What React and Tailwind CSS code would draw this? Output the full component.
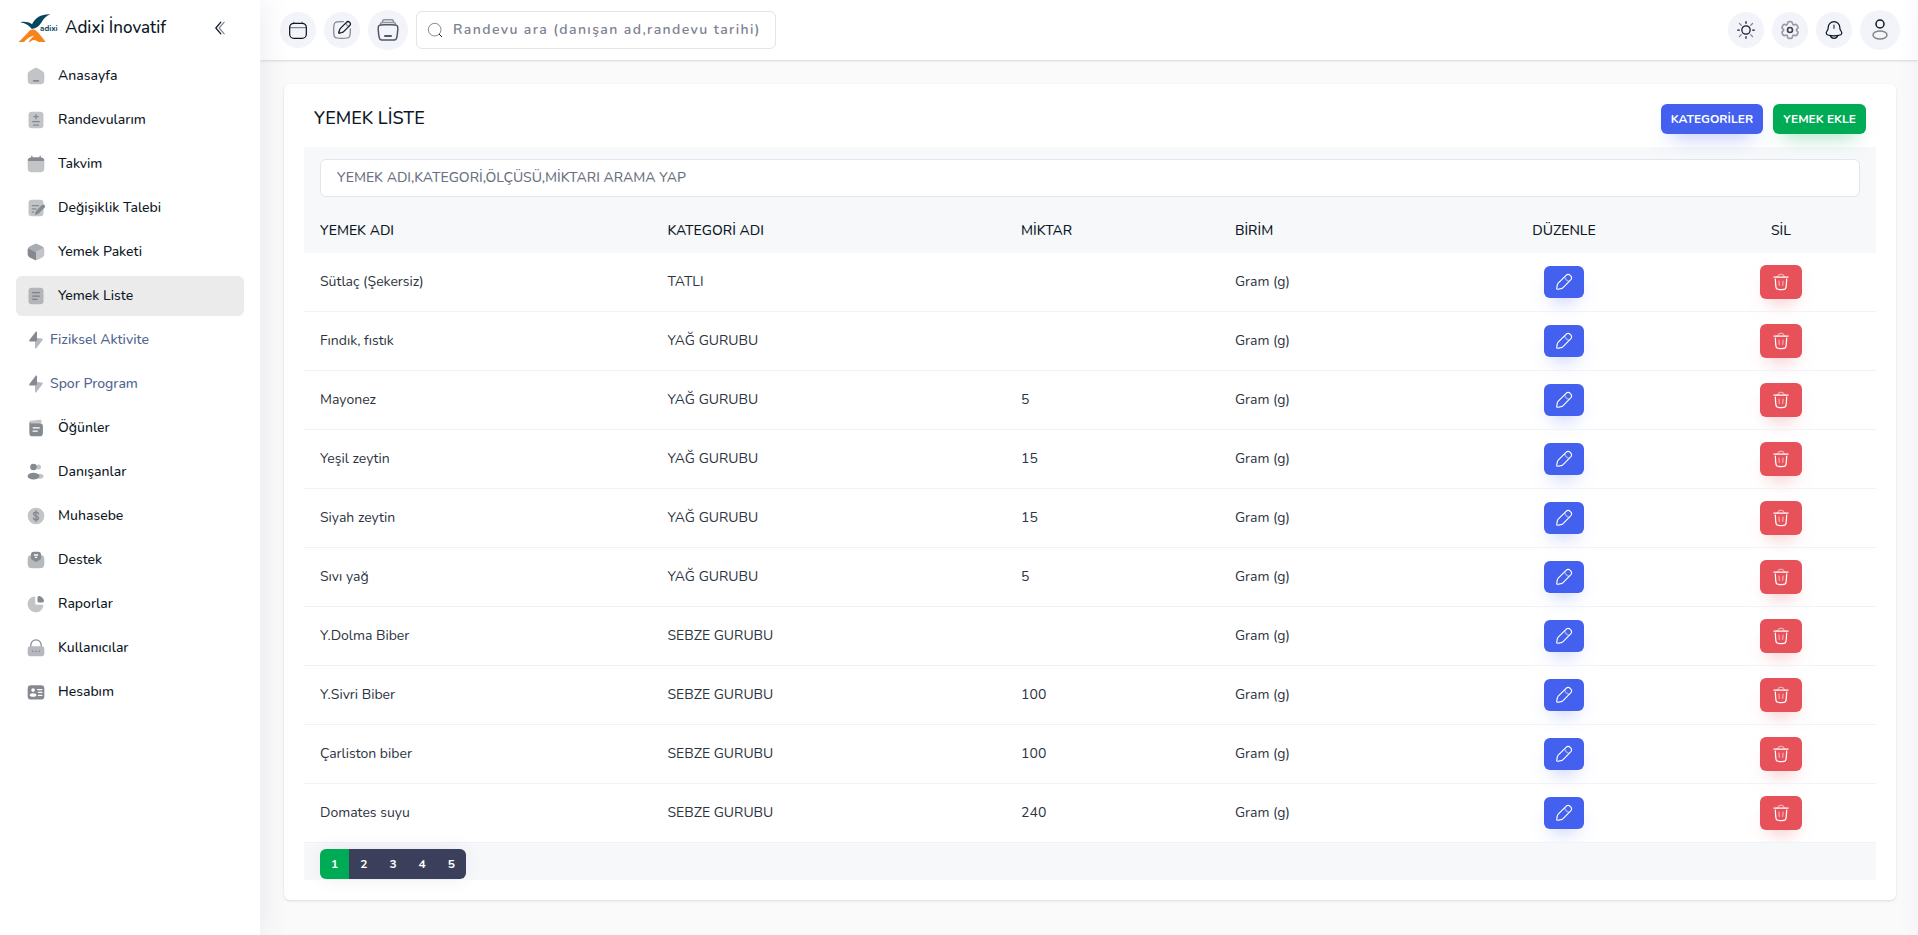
import React, { useState } from 'react';

const Svg = ({ size = 20, className = '', children }) => (
  <svg width={size} height={size} viewBox="0 0 24 24" fill="none" xmlns="http://www.w3.org/2000/svg" className={`shrink-0 ${className}`} aria-hidden="true">
    {children}
  </svg>
);

const Logo = () => (
  <svg width="42" height="30" viewBox="0 0 42 30" className="shrink-0" aria-hidden="true">
    <path d="M2.4 9.2C6.4 8.4 10.6 9 14 11.2C17.4 4.4 23.4 0.8 32.4 1.2C28.6 2.4 25.8 5.2 23.4 9.4C21.2 13 18 15.4 13.8 16C11.6 12.6 7.8 10.4 2.4 9.2Z" fill="#064660" />
    <path d="M0.5 29C4.8 25.4 7.8 21.4 10.8 18.4C13.2 16 16.2 16 18.4 18C21.8 21.2 24.8 25 27.6 29H20.6C18.8 27.8 17.2 27 15.6 27C14.2 27 13 28 12 29H10.6C12 26.4 14 24.2 16.4 22.4C12 23.2 8.8 25.6 6 29Z" fill="#f5841f" />
    <text x="22" y="18" fontSize="8" fontWeight="700" fontFamily="Nunito, sans-serif" fill="#064660">adixi</text>
  </svg>
);

const icons = {
  home: (
    <>
      <path opacity="0.5" d="M2 12.2C2 9.9 2 8.8 2.5 7.8C3 6.9 4 6.3 5.9 5.1L7.9 3.9C9.9 2.6 10.9 2 12 2C13.1 2 14.1 2.6 16.1 3.9L18.1 5.1C20 6.3 21 6.9 21.5 7.8C22 8.8 22 9.9 22 12.2V13.7C22 17.6 22 19.6 20.8 20.8C19.7 22 17.8 22 14 22H10C6.2 22 4.3 22 3.2 20.8C2 19.6 2 17.6 2 13.7V12.2Z" fill="currentColor" />
      <rect x="8.25" y="16.8" width="7.5" height="2" rx="0.75" fill="currentColor" />
    </>
  ),
  appointments: (
    <>
      <rect opacity="0.5" x="3" y="2" width="18" height="20" rx="4" fill="currentColor" />
      <path d="M12 5.5V10.5M9.5 8H14.5M8 14H16M9 18H15" stroke="currentColor" strokeWidth="1.5" strokeLinecap="round" />
    </>
  ),
  calendar: (
    <>
      <path d="M7.75 2.5C7.75 2.1 7.4 1.75 7 1.75C6.6 1.75 6.25 2.1 6.25 2.5V4.1C4.8 4.2 3.9 4.5 3.2 5.2C2.5 5.8 2.2 6.8 2.1 8.25H21.9C21.8 6.8 21.5 5.8 20.8 5.2C20.1 4.5 19.2 4.2 17.75 4.1V2.5C17.75 2.1 17.4 1.75 17 1.75C16.6 1.75 16.25 2.1 16.25 2.5V4H7.75V2.5Z" fill="currentColor" />
      <path opacity="0.5" d="M2 12C2 11.2 2 8.9 2.1 8.25H21.9C22 8.9 22 11.2 22 12V14C22 17.8 22 19.7 20.8 20.8C19.7 22 17.8 22 14 22H10C6.2 22 4.3 22 3.2 20.8C2 19.7 2 17.8 2 14V12Z" fill="currentColor" />
    </>
  ),
  request: (
    <>
      <rect opacity="0.5" x="3" y="2" width="18" height="20" rx="4" fill="currentColor" />
      <path d="M12.3 15.2L19 8.5C19.9 7.6 21.3 7.6 22.2 8.5C23.1 9.4 23.1 10.8 22.2 11.7L15.5 18.4C14.9 19 14.4 19.2 13.7 19.4L11.4 20C11 20.1 10.6 19.8 10.8 19.3L11.4 17C11.6 16.3 11.8 15.7 12.3 15.2Z" fill="currentColor" />
      <path d="M7.5 9H15M7.5 13H12M7.5 17H9" stroke="currentColor" strokeWidth="1.5" strokeLinecap="round" />
    </>
  ),
  box: (
    <>
      <path d="M12 12V22C11.2 22 10.4 21.6 8.9 20.8L6.5 19.6C4.3 18.4 3.2 17.9 2.6 16.8C2 15.8 2 14.5 2 12C2 9.6 2 8.3 2.6 7.2L12 12Z" fill="currentColor" />
      <path opacity="0.7" d="M8.6 3.2C10.2 2.4 11.1 2 12 2C12.9 2 13.8 2.4 15.4 3.2L17.8 4.5C19.9 5.6 20.9 6.1 21.4 7.2L12 12L2.6 7.2C3.1 6.1 4.1 5.6 6.2 4.5L8.6 3.2Z" fill="currentColor" />
      <path opacity="0.5" d="M12 12L21.4 7.2C22 8.3 22 9.6 22 12C22 14.5 22 15.8 21.4 16.8C20.8 17.9 19.7 18.4 17.5 19.6L15.1 20.8C13.6 21.6 12.8 22 12 22V12Z" fill="currentColor" />
    </>
  ),
  list: (
    <>
      <rect opacity="0.5" x="3" y="2" width="18" height="20" rx="4" fill="currentColor" />
      <path d="M8 8H16M8 12H16M8 16H13" stroke="currentColor" strokeWidth="1.5" strokeLinecap="round" />
    </>
  ),
  bolt: (
    <>
      <path opacity="0.6" d="M10.8 14.4V21.2C10.8 22.4 11.6 22.6 12.3 21.8L19.7 12.4C20.5 11.3 20.2 10.4 19 10.2L13.2 9.6V12.8L10.8 14.4Z" fill="currentColor" />
      <path d="M13.2 9.6V2.8C13.2 1.6 12.4 1.4 11.7 2.2L4.3 11.6C3.5 12.7 3.8 13.8 5 13.8H10.8V14.4L13.2 12.8V9.6Z" fill="currentColor" />
    </>
  ),
  meals: (
    <>
      <path opacity="0.5" d="M4 6.2V5.6C4 4.2 4.8 3.6 6 3.4L16.5 2.1C18 1.9 18.6 2.5 18.6 3.8V6.2H4Z" fill="currentColor" />
      <path fillRule="evenodd" clipRule="evenodd" d="M4 5.5C4 5.5 4.6 6.2 6 6.2H16C19 6.2 20.3 7.4 20.3 10V18C20.3 20.8 19 22 16.3 22H8C5.2 22 4 20.8 4 18V5.5ZM8.5 11C8.1 11 7.75 11.3 7.75 11.8C7.75 12.2 8.1 12.5 8.5 12.5H16C16.4 12.5 16.75 12.2 16.75 11.8C16.75 11.3 16.4 11 16 11H8.5ZM8.5 15C8.1 15 7.75 15.3 7.75 15.8C7.75 16.2 8.1 16.5 8.5 16.5H13.5C13.9 16.5 14.25 16.2 14.25 15.8C14.25 15.3 13.9 15 13.5 15H8.5Z" fill="currentColor" />
    </>
  ),
  users: (
    <>
      <circle opacity="0.5" cx="15" cy="6" r="3" fill="currentColor" />
      <ellipse opacity="0.5" cx="16" cy="17" rx="5" ry="3" fill="currentColor" />
      <circle cx="9" cy="6" r="4" fill="currentColor" />
      <ellipse cx="9" cy="17" rx="7" ry="4" fill="currentColor" />
    </>
  ),
  dollar: (
    <>
      <circle opacity="0.5" cx="12" cy="12" r="10" fill="currentColor" />
      <path d="M12 5.8V18.2M15 9.6C15 8.3 13.7 7.5 12 7.5C10.3 7.5 9 8.4 9 9.7C9 11.1 10.2 11.6 12 12C13.8 12.4 15 13 15 14.3C15 15.7 13.7 16.5 12 16.5C10.3 16.5 9 15.6 9 14.3" stroke="currentColor" strokeWidth="1.7" strokeLinecap="round" />
    </>
  ),
  support: (
    <>
      <path opacity="0.6" d="M2 12C2 8.5 3 6.5 6 6L12 10L18 6C21 6.5 22 8.5 22 12V15C22 20.5 20.5 22 15 22H9C3.5 22 2 20.5 2 15V12Z" fill="currentColor" />
      <path fillRule="evenodd" clipRule="evenodd" d="M6 5.5C6 3 7 2 9.5 2H14.5C17 2 18 3 18 5.5V9.5C18 10.5 17.5 11 16.7 11.6L13.8 13.4C12.6 14.2 11.4 14.2 10.2 13.4L7.3 11.6C6.5 11 6 10.5 6 9.5V5.5ZM9.5 5.2V6.8H14.5V5.2H9.5ZM10.5 8.2V9.6H13.5V8.2H10.5Z" fill="currentColor" />
    </>
  ),
  reports: (
    <>
      <path opacity="0.5" d="M10 3C5.5 3.3 2 7.2 2 12C2 17.2 6.3 21.8 11.5 22C16.3 22 20.2 18.5 20.8 14C20.8 13.4 20.4 13 19.8 13H12.5C11.6 13 11 12.4 11 11.5V4C11 3.4 10.6 3 10 3Z" fill="currentColor" />
      <path d="M21.5 7.6C20.6 5.2 18.8 3.4 16.4 2.5C15 2 13.8 3 13.8 4.5V8.8C13.8 9.7 14.3 10.2 15.2 10.2H19.5C21 10.2 22 9 21.5 7.6Z" fill="currentColor" />
    </>
  ),
  lock: (
    <>
      <path opacity="0.6" d="M2 16C2 13.2 2 11.8 2.9 10.9C3.8 10 5.2 10 8 10H16C18.8 10 20.2 10 21.1 10.9C22 11.8 22 13.2 22 16C22 18.8 22 20.2 21.1 21.1C20.2 22 18.8 22 16 22H8C5.2 22 3.8 22 2.9 21.1C2 20.2 2 18.8 2 16Z" fill="currentColor" />
      <path d="M5.8 10V8.5C5.8 5 8.5 2.2 12 2.2C15.5 2.2 18.2 5 18.2 8.5V10" stroke="currentColor" strokeWidth="1.5" />
      <circle cx="8" cy="16" r="1" fill="currentColor" />
      <circle cx="12" cy="16" r="1" fill="currentColor" />
      <circle cx="16" cy="16" r="1" fill="currentColor" />
    </>
  ),
  account: (
    <>
      <rect x="2" y="4" width="20" height="17" rx="4" fill="currentColor" />
      <circle cx="8.5" cy="9.7" r="2.2" fill="white" />
      <ellipse cx="8.5" cy="15.6" rx="4" ry="2.2" fill="white" />
      <path d="M14 9H19M15 12.5H19M15 16H19" stroke="white" strokeWidth="1.5" strokeLinecap="round" />
    </>
  ),
};

const menu = [
  { label: 'Anasayfa', icon: 'home' },
  { label: 'Randevularım', icon: 'appointments' },
  { label: 'Takvim', icon: 'calendar' },
  { label: 'Değişiklik Talebi', icon: 'request' },
  { label: 'Yemek Paketi', icon: 'box' },
  { label: 'Yemek Liste', icon: 'list', active: true },
  { label: 'Fiziksel Aktivite', icon: 'bolt', sub: true },
  { label: 'Spor Program', icon: 'bolt', sub: true },
  { label: 'Öğünler', icon: 'meals' },
  { label: 'Danışanlar', icon: 'users' },
  { label: 'Muhasebe', icon: 'dollar' },
  { label: 'Destek', icon: 'support' },
  { label: 'Raporlar', icon: 'reports' },
  { label: 'Kullanıcılar', icon: 'lock' },
  { label: 'Hesabım', icon: 'account' },
];

const foods = [
  { name: 'Sütlaç (Şekersiz)', category: 'TATLI', amount: '', unit: 'Gram (g)' },
  { name: 'Fındık, fıstık', category: 'YAĞ GURUBU', amount: '', unit: 'Gram (g)' },
  { name: 'Mayonez', category: 'YAĞ GURUBU', amount: '5', unit: 'Gram (g)' },
  { name: 'Yeşil zeytin', category: 'YAĞ GURUBU', amount: '15', unit: 'Gram (g)' },
  { name: 'Siyah zeytin', category: 'YAĞ GURUBU', amount: '15', unit: 'Gram (g)' },
  { name: 'Sıvı yağ', category: 'YAĞ GURUBU', amount: '5', unit: 'Gram (g)' },
  { name: 'Y.Dolma Biber', category: 'SEBZE GURUBU', amount: '', unit: 'Gram (g)' },
  { name: 'Y.Sivri Biber', category: 'SEBZE GURUBU', amount: '100', unit: 'Gram (g)' },
  { name: 'Çarliston biber', category: 'SEBZE GURUBU', amount: '100', unit: 'Gram (g)' },
  { name: 'Domates suyu', category: 'SEBZE GURUBU', amount: '240', unit: 'Gram (g)' },
];

const Sidebar = () => (
  <aside className="relative z-20 w-[260px] shrink-0 bg-white shadow-[5px_0_25px_0_rgba(94,92,154,0.1)]">
    <div className="flex items-center justify-between pl-[18px] pr-6 h-14">
      <a href="#" className="flex items-center gap-[5px]">
        <Logo />
        <span className="text-[17px] font-medium">Adixi İnovatif</span>
      </a>
      <button type="button" aria-label="Menüyü daralt" className="w-8 h-8 flex items-center justify-center rounded-full">
        <Svg>
          <path d="M13 19L7 12L13 5" stroke="currentColor" strokeWidth="1.5" strokeLinecap="round" strokeLinejoin="round" />
          <path opacity="0.5" d="M17 19L11 12L17 5" stroke="currentColor" strokeWidth="1.5" strokeLinecap="round" strokeLinejoin="round" />
        </Svg>
      </button>
    </div>
    <nav>
      <ul className="flex flex-col gap-1 px-4">
        {menu.map((item) => (
          <li key={item.label}>
            <a
              href="#"
              className={`flex items-center h-10 px-2.5 rounded-md text-sm font-medium ${item.sub ? 'gap-1 text-[#506690]' : 'gap-3'} ${item.active ? 'bg-[#ebebeb]' : ''}`}
            >
              <Svg className="text-[#0e1726] opacity-50">{icons[item.icon]}</Svg>
              <span>{item.label}</span>
            </a>
          </li>
        ))}
      </ul>
    </nav>
  </aside>
);

const RoundButton = ({ label, big, children }) => (
  <button type="button" aria-label={label} className={`${big ? 'w-10 h-10' : 'w-9 h-9'} shrink-0 rounded-full bg-[#f3f4f9] flex items-center justify-center`}>
    {children}
  </button>
);

const Header = () => (
  <header className="h-[60px] bg-white shadow-sm flex items-center gap-2 pl-5 pr-[18px]">
    <RoundButton label="Takvim">
      <Svg>
        <rect x="2" y="4" width="20" height="18" rx="5" stroke="currentColor" strokeWidth="1.5" />
        <path opacity="0.5" d="M7 4V2.5M17 4V2.5M2.5 9H21.5" stroke="currentColor" strokeWidth="1.5" strokeLinecap="round" />
      </Svg>
    </RoundButton>
    <RoundButton label="Not ekle">
      <Svg>
        <path opacity="0.5" d="M22 10.5V12C22 16.7 22 19.1 20.5 20.5C19.1 22 16.7 22 12 22C7.3 22 4.9 22 3.5 20.5C2 19.1 2 16.7 2 12C2 7.3 2 4.9 3.5 3.5C4.9 2 7.3 2 12 2H13.5" stroke="currentColor" strokeWidth="1.5" strokeLinecap="round" />
        <path d="M17.3 2.8L16.7 3.4L10.7 9.4C10.2 9.9 10 10.1 9.9 10.3C9.7 10.6 9.5 10.8 9.4 11.1C9.3 11.4 9.2 11.7 9 12.2L8.1 14.9C7.9 15.6 8.4 16.1 9.1 15.9L11.8 15C12.3 14.8 12.6 14.7 12.9 14.6C13.2 14.5 13.4 14.3 13.7 14.1C13.9 14 14.1 13.8 14.6 13.3L21.2 6.7C22.3 5.6 22.3 3.9 21.2 2.8C20.1 1.7 18.4 1.7 17.3 2.8Z" stroke="currentColor" strokeWidth="1.5" />
        <path opacity="0.5" d="M16.6 3.5C16.6 3.5 16.7 4.9 17.9 6.1C19.1 7.3 20.5 7.4 20.5 7.4M10.2 15.6L8.4 13.8" stroke="currentColor" strokeWidth="1.5" />
      </Svg>
    </RoundButton>
    <RoundButton label="Arşiv" big>
      <Svg size={24} className="opacity-70">
        <path d="M2.4 13.5C2 10 1.9 8.8 2.8 7.8C3.8 6.8 5.5 6.8 8.8 6.8H15.2C18.5 6.8 20.2 6.8 21.2 7.8C22.1 8.8 22 10 21.6 13.5L21.2 17.3C20.9 19.6 20.7 20.7 19.9 21.4C19.1 22.1 17.9 22.1 15.5 22.1H8.5C6.1 22.1 4.9 22.1 4.1 21.4C3.3 20.7 3.1 19.6 2.8 17.3L2.4 13.5Z" stroke="currentColor" strokeWidth="1.5" />
        <path opacity="0.6" d="M19.6 6.6C19.6 5.2 18.7 4.4 17.4 4.4H6.6C5.3 4.4 4.4 5.2 4.4 6.6M17.5 4.2C17.5 2.6 17 1.8 15.6 1.8H8.4C7 1.8 6.5 2.6 6.5 4.2" stroke="currentColor" strokeWidth="1.5" />
        <path d="M9 18H15" stroke="currentColor" strokeWidth="2" strokeLinecap="round" />
      </Svg>
    </RoundButton>
    <form className="w-[360px] h-[38px] flex items-center gap-2.5 px-2.5 rounded-md border border-[#e0e6ed] bg-white" onSubmit={(e) => e.preventDefault()}>
      <Svg size={16}>
        <circle opacity="0.5" cx="11.5" cy="11.5" r="9.5" stroke="currentColor" strokeWidth="1.5" />
        <path d="M18.5 18.5L22 22" stroke="currentColor" strokeWidth="1.5" strokeLinecap="round" />
      </Svg>
      <input
        type="text"
        aria-label="Randevu ara"
        placeholder="Randevu ara (danışan ad,randevu tarihi)"
        className="w-full min-w-0 text-sm font-semibold tracking-widest outline-none placeholder:text-[#7b8190]"
      />
    </form>
    <div className="ml-auto flex items-center gap-2">
      <RoundButton label="Tema">
        <Svg>
          <circle cx="12" cy="12" r="5" stroke="currentColor" strokeWidth="1.5" />
          <path d="M12 2V4M12 20V22M4 12H2M22 12H20" stroke="currentColor" strokeWidth="1.5" strokeLinecap="round" />
          <path opacity="0.5" d="M19.8 4.2L17.6 6.4M4.2 4.2L6.4 6.4M6.4 17.6L4.2 19.8M19.8 19.8L17.6 17.6" stroke="currentColor" strokeWidth="1.5" strokeLinecap="round" />
        </Svg>
      </RoundButton>
      <RoundButton label="Ayarlar">
        <Svg>
          <circle cx="12" cy="12" r="3" stroke="currentColor" strokeWidth="2" opacity="0.8" />
          <path opacity="0.4" d="M13.8 2.2C13.4 2 12.9 2 12 2C11.1 2 10.6 2 10.2 2.2C9.8 2.3 9.3 2.8 9.2 3.2C9.1 3.5 9 3.8 9 4.2C9 4.8 8.7 5.3 8.2 5.6C7.7 5.9 7.1 5.9 6.6 5.6C6.2 5.4 5.9 5.3 5.6 5.3C5.1 5.2 4.5 5.3 4.1 5.7C3.8 5.9 3.6 6.4 3.2 7.1C2.7 7.9 2.5 8.3 2.4 8.6C2.4 9.1 2.5 9.7 2.8 10.1C3 10.3 3.2 10.5 3.6 10.7C4.1 11 4.4 11.5 4.4 12C4.4 12.5 4.1 13 3.6 13.3C3.2 13.5 3 13.7 2.8 13.9C2.5 14.3 2.4 14.9 2.4 15.4C2.5 15.7 2.7 16.1 3.2 16.9C3.6 17.6 3.8 18.1 4.1 18.3C4.5 18.7 5.1 18.8 5.6 18.7C5.9 18.7 6.2 18.6 6.6 18.4C7.1 18.1 7.7 18.1 8.2 18.4C8.7 18.7 9 19.2 9 19.8C9 20.2 9.1 20.5 9.2 20.8C9.3 21.2 9.8 21.7 10.2 21.8C10.6 22 11.1 22 12 22C12.9 22 13.4 22 13.8 21.8C14.2 21.7 14.7 21.2 14.8 20.8C14.9 20.5 15 20.2 15 19.8C15 19.2 15.3 18.7 15.8 18.4C16.3 18.1 16.9 18.1 17.4 18.4C17.8 18.6 18.1 18.7 18.4 18.7C18.9 18.8 19.5 18.7 19.9 18.3C20.2 18.1 20.4 17.6 20.8 16.9C21.3 16.1 21.5 15.7 21.6 15.4C21.6 14.9 21.5 14.3 21.2 13.9C21 13.7 20.8 13.5 20.4 13.3C19.9 13 19.6 12.5 19.6 12C19.6 11.5 19.9 11 20.4 10.7C20.8 10.5 21 10.3 21.2 10.1C21.5 9.7 21.6 9.1 21.6 8.6C21.5 8.3 21.3 7.9 20.8 7.1C20.4 6.4 20.2 5.9 19.9 5.7C19.5 5.3 18.9 5.2 18.4 5.3C18.1 5.3 17.8 5.4 17.4 5.6C16.9 5.9 16.3 5.9 15.8 5.6C15.3 5.3 15 4.8 15 4.2C15 3.8 14.9 3.5 14.8 3.2C14.7 2.8 14.2 2.3 13.8 2.2Z" stroke="currentColor" strokeWidth="2" />
        </Svg>
      </RoundButton>
      <RoundButton label="Bildirimler">
        <Svg>
          <path d="M19 9.7V9C19 5.1 15.9 2 12 2C8.1 2 5 5.1 5 9V9.7C5 10.6 4.8 11.4 4.3 12.1L3.2 13.8C2.1 15.4 2.9 17.5 4.7 18C9.5 19.3 14.5 19.3 19.3 18C21.1 17.5 21.9 15.4 20.8 13.8L19.7 12.1C19.2 11.4 19 10.6 19 9.7Z" stroke="currentColor" strokeWidth="1.5" />
          <path d="M7.5 19C8.2 20.7 9.9 22 12 22C14.1 22 15.8 20.7 16.5 19" stroke="currentColor" strokeWidth="1.5" strokeLinecap="round" />
          <path opacity="0.8" d="M12 6V10" stroke="currentColor" strokeWidth="1.5" strokeLinecap="round" />
        </Svg>
      </RoundButton>
      <RoundButton label="Profil" big>
        <Svg size={24}>
          <circle cx="12" cy="6" r="4" stroke="currentColor" strokeWidth="1.5" />
          <ellipse opacity="0.5" cx="12" cy="17" rx="7" ry="4" stroke="currentColor" strokeWidth="1.5" />
        </Svg>
      </RoundButton>
    </div>
  </header>
);

const PencilIcon = () => (
  <Svg size={18}>
    <path d="M14.4 3.4L4.6 13.2C4 13.8 3.7 14.2 3.5 14.7C3.2 15.3 3.1 16 2.9 17.3L2.3 20.2C2.1 21.4 2.6 21.9 3.8 21.7L6.7 21.1C8 20.9 8.7 20.8 9.3 20.5C9.8 20.3 10.2 20 10.8 19.4L20.6 9.6C22.3 7.9 22.3 5.1 20.6 3.4C18.9 1.7 16.1 1.7 14.4 3.4Z" stroke="currentColor" strokeWidth="1.5" />
    <path opacity="0.5" d="M13 4.8C13 4.8 13.2 7.2 15 9C16.8 10.8 19.2 11 19.2 11" stroke="currentColor" strokeWidth="1.5" />
  </Svg>
);

const TrashIcon = () => (
  <Svg size={20}>
    <path d="M20.5 6H3.5" stroke="currentColor" strokeWidth="1.5" strokeLinecap="round" />
    <path d="M18.8 8.5L18.4 15.4C18.2 18 18.1 19.4 17.2 20.2C16.4 21 15.1 21 12.4 21H11.6C8.9 21 7.6 21 6.8 20.2C5.9 19.4 5.8 18 5.6 15.4L5.2 8.5" stroke="currentColor" strokeWidth="1.5" strokeLinecap="round" />
    <path opacity="0.5" d="M9.5 11L10 16M14.5 11L14 16" stroke="currentColor" strokeWidth="1.5" strokeLinecap="round" />
    <path opacity="0.5" d="M6.5 6C7.7 6 8.6 5.2 9 4.1C9.3 3 9.8 2.8 11 2.8H13C14.2 2.8 14.7 3 15 4.1C15.4 5.2 16.3 6 17.5 6" stroke="currentColor" strokeWidth="1.5" />
  </Svg>
);

const FoodTable = () => (
  <table className="w-full table-fixed text-sm">
    <colgroup>
      <col className="w-[22.1%]" />
      <col className="w-[22.5%]" />
      <col className="w-[13.6%]" />
      <col className="w-[14.2%]" />
      <col className="w-[15.5%]" />
      <col className="w-[12.1%]" />
    </colgroup>
    <thead className="bg-[#f6f8fa] text-left">
      <tr>
        <td colSpan={6} className="px-4 py-3">
          <input
            type="text"
            aria-label="Yemek ara"
            placeholder="YEMEK ADI,KATEGORİ,ÖLÇÜSÜ,MİKTARI ARAMA YAP"
            className="block w-full h-[38px] px-4 pb-0.5 rounded-md border border-[#e0e6ed] bg-white text-sm font-medium outline-none placeholder:text-[#6b7280]"
          />
        </td>
      </tr>
      <tr>
        <th className="px-4 py-3 font-medium">YEMEK ADI</th>
        <th className="px-4 py-3 font-medium">KATEGORİ ADI</th>
        <th className="px-4 py-3 font-medium">MİKTAR</th>
        <th className="px-4 py-3 font-medium">BİRİM</th>
        <th className="px-4 py-3 font-medium text-center">DÜZENLE</th>
        <th className="px-4 py-3 font-medium text-center">SİL</th>
      </tr>
    </thead>
    <tbody className="text-[#2c3340]">
      {foods.map((food) => (
        <tr key={food.name} className="border-b border-[#eff2f6]">
          <td className="px-4 py-3">{food.name}</td>
          <td className="px-4 py-3">{food.category}</td>
          <td className="px-4 py-3">{food.amount}</td>
          <td className="px-4 py-3">{food.unit}</td>
          <td className="px-4 py-3">
            <button type="button" aria-label="Düzenle" className="mx-auto w-10 h-8 rounded-md bg-[#4361ee] text-white flex items-center justify-center shadow-[0_10px_20px_-10px_rgba(67,97,238,0.6)]">
              <PencilIcon />
            </button>
          </td>
          <td className="px-4 py-3">
            <button type="button" aria-label="Sil" className="mx-auto w-[42px] h-[34px] rounded-md bg-[#e7515a] text-white flex items-center justify-center shadow-[0_10px_20px_-10px_rgba(231,81,90,0.6)]">
              <TrashIcon />
            </button>
          </td>
        </tr>
      ))}
    </tbody>
  </table>
);

const Pagination = () => {
  const [page, setPage] = useState(1);

  return (
    <div className="bg-[#f6f8fa] px-4 pt-1.5 pb-px flex">
      <div className="flex w-[146px] rounded-md overflow-hidden shadow-[0_0_20px_-4px_rgba(59,63,92,0.15)]">
        {[1, 2, 3, 4, 5].map((n) => (
          <button
            key={n}
            type="button"
            onClick={() => setPage(n)}
            className={`flex-1 h-[30px] text-xs font-bold text-white ${n === page ? 'bg-[#00ab55]' : 'bg-[#3b3f5c]'}`}
          >
            {n}
          </button>
        ))}
      </div>
    </div>
  );
};

const App = () => (
  <div className="min-h-screen flex bg-[#fafafa] text-[#0e1726] font-['Nunito','Open_Sans',sans-serif]">
    <Sidebar />
    <div className="flex-1 min-w-0">
      <Header />
      <main className="pt-6 pb-6 pl-6 pr-[22px]">
        <section className="bg-white rounded-md shadow p-5">
          <div className="flex items-start justify-between px-2.5 pb-[13px]">
            <h1 className="text-lg font-medium">YEMEK LİSTE</h1>
            <div className="flex gap-2.5">
              <button type="button" className="h-[30px] px-2.5 rounded-md bg-[#4361ee] text-white text-xs font-bold shadow-[0_10px_20px_-10px_rgba(67,97,238,0.6)]">
                KATEGORİLER
              </button>
              <button type="button" className="h-[30px] px-2.5 rounded-md bg-[#00ab55] text-white text-xs font-bold shadow-[0_10px_20px_-10px_rgba(0,171,85,0.6)]">
                YEMEK EKLE
              </button>
            </div>
          </div>
          <FoodTable />
          <Pagination />
        </section>
      </main>
    </div>
    {/* settings drawer, closed */}
    <aside aria-hidden="true" className="fixed top-0 bottom-0 left-full w-[400px] bg-white shadow-[5px_0_25px_0_rgba(94,92,154,0.1)]" />
  </div>
);

export default App;
